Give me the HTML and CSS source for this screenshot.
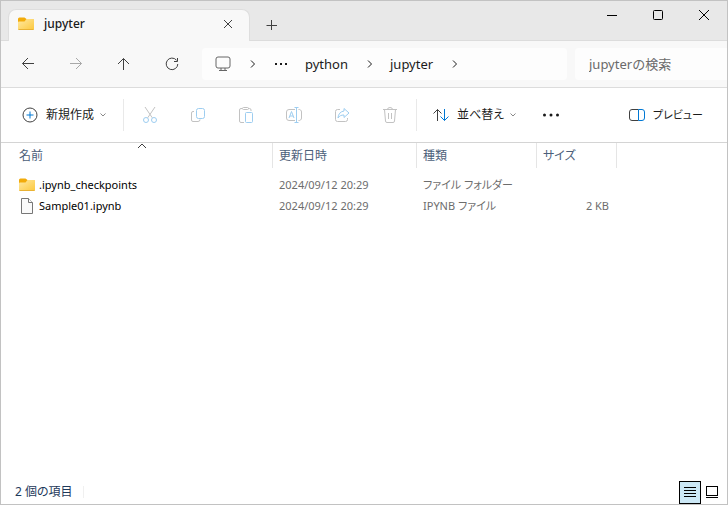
FILE: index.html
```html
<!DOCTYPE html>
<html lang="ja">
<head>
    <meta charset="UTF-8">
    <meta name="viewport" content="width=device-width, initial-scale=1.0">
    <title>jupyter</title>
    <link rel="stylesheet" href="styles.css">
</head>
<body>
    <svg class="defs" aria-hidden="true">
        <defs>
            <linearGradient id="folderFill" x1="0" y1="0" x2="1" y2="1">
                <stop offset="0" stop-color="#ffe9a3"/>
                <stop offset="1" stop-color="#fcc83c"/>
            </linearGradient>
            <symbol id="folder" viewBox="0 0 16 14">
                <path d="M0 2a1.500 1.500 0 0 1 1.500-1.500h5L8.500 2H14.500A1.500 1.500 0 0 1 16 3.500V6H0z" fill="#f2ab0a"/>
                <path d="M0 5.500a1 1 0 0 1 1-1h5.500L8.500 2H15a1 1 0 0 1 1 1v9a1 1 0 0 1-1 1H1a1 1 0 0 1-1-1z" fill="url(#folderFill)"/>
                <path d="M.5 12.500h15" stroke="#e9b234" stroke-width="1"/>
            </symbol>
            <symbol id="chevron" viewBox="0 0 8 10">
                <path d="M2 1.500L5.500 5 2 8.500"/>
            </symbol>
            <symbol id="chevronDown" viewBox="0 0 8 6">
                <path d="M1.500 1.500L4 4l2.500-2.500"/>
            </symbol>
        </defs>
    </svg>

    <div class="window">
        <!-- タブとウィンドウボタン -->
        <header class="titlebar">
            <div class="tab">
                <svg class="folder-icon" viewBox="0 0 16 14"><use href="#folder"/></svg>
                <span class="tab-title">jupyter</span>
                <button class="tab-close" aria-label="タブを閉じる">
                    <svg class="icon" width="10" height="10" viewBox="0 0 10 10"><path d="M1 1l8 8M9 1L1 9"/></svg>
                </button>
            </div>
            <button class="tab-new" aria-label="新しいタブ">
                <svg class="icon" width="12" height="12" viewBox="0 0 12 12"><path d="M5.500 1v10M.5 6.500h10.500"/></svg>
            </button>
            <div class="window-buttons">
                <button aria-label="最小化"><svg class="icon black" width="12" height="12" viewBox="0 0 12 12"><path d="M1 6.500h10"/></svg></button>
                <button aria-label="最大化"><svg class="icon black" width="12" height="12" viewBox="0 0 12 12"><rect x="1.500" y="1.500" width="9" height="9" rx="1"/></svg></button>
                <button aria-label="閉じる"><svg class="icon black" width="12" height="12" viewBox="0 0 12 12"><path d="M1 1l10 10M11 1L1 11"/></svg></button>
            </div>
        </header>

        <!-- ナビゲーション -->
        <nav class="navbar">
            <button class="tool" aria-label="戻る"><svg class="icon" width="14" height="14" viewBox="0 0 14 14"><path d="M13 6.500H1.500M7 1L1.500 6.500 7 12"/></svg></button>
            <button class="tool" aria-label="進む" disabled><svg class="icon faded" width="14" height="14" viewBox="0 0 14 14"><path d="M1 6.500h11.500M7 1l5.500 5.500L7 12"/></svg></button>
            <button class="tool" aria-label="上へ"><svg class="icon" width="14" height="14" viewBox="0 0 14 14"><path d="M6.500 13V1.500M1 7l5.500-5.500L12 7"/></svg></button>
            <button class="tool" aria-label="更新"><svg class="icon" width="14" height="14" viewBox="0 0 14 14"><path d="M11.500 3.200A5.800 5.800 0 1 0 12.800 7M12.500 1v3.500H9"/></svg></button>
            <div class="address">
                <button class="crumb" aria-label="PC">
                    <svg class="icon monitor" width="16" height="16" viewBox="0 0 16 16"><rect x="1" y="1" width="14" height="11" rx="2"/><path d="M6 12v2.500M10 12v2.500M4 14.500h8"/></svg>
                </button>
                <svg class="icon arrow" viewBox="0 0 8 10"><use href="#chevron"/></svg>
                <button class="crumb dots-crumb" aria-label="その他のフォルダー">
                    <svg class="dots" width="14" height="4" viewBox="0 0 14 4"><path d="M1 1h2v2H1zM6 1h2v2H6zM11 1h2v2h-2z"/></svg>
                </button>
                <button class="crumb">python</button>
                <svg class="icon arrow" viewBox="0 0 8 10"><use href="#chevron"/></svg>
                <button class="crumb">jupyter</button>
                <svg class="icon arrow" viewBox="0 0 8 10"><use href="#chevron"/></svg>
            </div>
            <input class="search" type="text" placeholder="jupyterの検索" aria-label="jupyterの検索">
        </nav>

        <!-- コマンドバー -->
        <div class="commands">
            <button class="command new">
                <svg class="icon" width="16" height="16" viewBox="0 0 16 16"><circle cx="8" cy="8" r="7"/><path class="blue" d="M8 4.500v7M4.500 8h7"/></svg>
                <span>新規作成</span>
                <svg class="icon down" viewBox="0 0 8 6"><use href="#chevronDown"/></svg>
            </button>
            <span class="divider"></span>
            <div class="edit-tools">
                <button class="tool" aria-label="切り取り" disabled><svg class="icon off" width="16" height="16" viewBox="0 0 16 16"><path d="M3 0l7.300 10.800M13 0L5.700 10.800"/><circle class="sky" cx="4" cy="13" r="2.500"/><circle class="sky" cx="12" cy="13" r="2.500"/></svg></button>
                <button class="tool" aria-label="コピー" disabled><svg class="icon off" width="16" height="16" viewBox="0 0 16 16"><path d="M4 4.500H3A1.500 1.500 0 0 0 1.500 6v7A1.500 1.500 0 0 0 3 14.500h5a2 2 0 0 0 2-2"/><rect class="sky" x="6.500" y="1.500" width="8" height="10" rx="2"/></svg></button>
                <button class="tool" aria-label="貼り付け" disabled><svg class="icon off" width="16" height="16" viewBox="0 0 16 16"><path d="M6 15.500H3A1.500 1.500 0 0 1 1.500 14V3A1.500 1.500 0 0 1 3 1.500h1M10 1.500h1.500A1.500 1.500 0 0 1 13 3v1"/><rect x="4.500" y=".5" width="6" height="2" rx="1"/><rect class="sky" x="7.500" y="5.500" width="7" height="10" rx="1"/></svg></button>
                <button class="tool" aria-label="名前の変更" disabled><svg class="icon off" width="16" height="16" viewBox="0 0 16 16"><path d="M9 13.500H3A2.500 2.500 0 0 1 .5 11V5A2.500 2.500 0 0 1 3 2.500h6M12.500 2.500A2.500 2.500 0 0 1 15.500 5v6a2.500 2.500 0 0 1-3 2.500"/><path class="sky" d="M10.500 .5v15M8.500 .5h4M8.500 15.500h4M3 11l2.500-6.500L8 11M4 9h3"/></svg></button>
                <button class="tool" aria-label="共有" disabled><svg class="icon off" width="16" height="16" viewBox="0 0 16 16"><path d="M6 2.500H3.500A2 2 0 0 0 1.500 4.500v8a2 2 0 0 0 2 2h8a2 2 0 0 0 2-2V11"/><path class="sky" d="M10 1.500L15 6l-5 4.500V8C7 8 5.500 8.800 4 11c.2-4 2.500-6.500 6-7z"/></svg></button>
                <button class="tool" aria-label="削除" disabled><svg class="icon off" width="16" height="16" viewBox="0 0 16 16"><path d="M1 2.500h14M5.500 2.500a2.500 2 0 0 1 5 0M2.500 2.500l1 11.500a1.500 1.500 0 0 0 1.500 1.500h6a1.500 1.500 0 0 0 1.500-1.500l1-11.500M6.500 6v6M9.500 6v6"/></svg></button>
            </div>
            <span class="divider"></span>
            <button class="command">
                <svg class="icon" width="16" height="16" viewBox="0 0 16 16"><path d="M4.500 14V2.500M.5 6.500l4-4 4 4"/><path class="blue" d="M11.500 2v11.500M7.500 9.500l4 4 4-4"/></svg>
                <span>並べ替え</span>
                <svg class="icon down" viewBox="0 0 8 6"><use href="#chevronDown"/></svg>
            </button>
            <button class="more" aria-label="もっと見る">
                <svg class="dots" width="18" height="4" viewBox="0 0 18 4"><circle cx="2.500" cy="2" r="1.500"/><circle cx="9" cy="2" r="1.500"/><circle cx="15.500" cy="2" r="1.500"/></svg>
            </button>
            <button class="command preview">
                <svg class="icon" width="16" height="16" viewBox="0 0 16 16"><path d="M9.500 2.500H3A2.500 2.500 0 0 0 .5 5v6A2.500 2.500 0 0 0 3 13.500h6.500"/><path class="blue" d="M9.500 2.500H13A2.500 2.500 0 0 1 15.500 5v6a2.500 2.500 0 0 1-2.500 2.500H9.500z"/></svg>
                <span>プレビュー</span>
            </button>
        </div>

        <!-- ファイル一覧 -->
        <main class="files">
            <table>
                <colgroup>
                    <col class="col-name"><col class="col-date"><col class="col-type"><col class="col-size"><col>
                </colgroup>
                <thead>
                    <tr>
                        <th class="sorted">名前
                            <svg class="icon sort-mark" width="10" height="6" viewBox="0 0 10 6"><path d="M1 5l4-4 4 4"/></svg>
                        </th>
                        <th>更新日時</th>
                        <th>種類</th>
                        <th>サイズ</th>
                        <td></td>
                    </tr>
                </thead>
                <tbody>
                    <tr>
                        <td class="name"><div class="file"><svg class="folder-icon" viewBox="0 0 16 14"><use href="#folder"/></svg>.ipynb_checkpoints</div></td>
                        <td>2024/09/12 20:29</td>
                        <td>ファイル フォルダー</td>
                        <td class="size"></td>
                        <td></td>
                    </tr>
                    <tr>
                        <td class="name"><div class="file"><svg class="page-icon" viewBox="0 0 16 16"><path d="M2.500 .5h7l4 4v11h-11z"/><path d="M9.500 .5v4h4"/></svg>Sample01.ipynb</div></td>
                        <td>2024/09/12 20:29</td>
                        <td>IPYNB ファイル</td>
                        <td class="size">2 KB</td>
                        <td></td>
                    </tr>
                </tbody>
            </table>
        </main>

        <!-- ステータスバー -->
        <footer class="status">
            <span class="count">2 個の項目</span>
            <div class="views">
                <button class="view active" aria-label="詳細表示"><svg class="icon black" width="14" height="12" viewBox="0 0 14 12"><path d="M1 1.500h12M1 4.500h12M1 7.500h12M1 10.500h12"/></svg></button>
                <button class="view" aria-label="大きいアイコン"><svg class="icon black" width="14" height="14" viewBox="0 0 14 14"><rect x="1.500" y="1.500" width="11" height="9"/><path d="M1 12.500h12"/></svg></button>
            </div>
        </footer>
    </div>
</body>
</html>
```
FILE: styles.css
```css
* {
    box-sizing: border-box;
}

body {
    margin: 0;
    font-family: "Noto Sans", "Noto Sans CJK JP", sans-serif;
    font-size: 12px;
    line-height: 20px;
    color: #1b1b1b;
}

button {
    display: flex;
    align-items: center;
    justify-content: center;
    padding: 0;
    border: none;
    background: none;
    font: inherit;
    color: inherit;
}

.defs {
    position: absolute;
    width: 0;
    height: 0;
}

.window {
    display: flex;
    flex-direction: column;
    min-height: 100vh;
    border: 1px solid #c2c2c2;
    background: #fff;
}

/* アイコン */
.icon {
    display: block;
    flex: none;
    fill: none;
    stroke: #404040;
    stroke-width: 1;
}

.icon.black {
    stroke: #000;
}

.icon.faded {
    stroke: #a8a8a8;
}

.icon.off {
    stroke: #c2c2c2;
}

.icon .blue {
    stroke: #0078d4;
}

.icon .sky {
    stroke: #9dcdf0;
}

.dots {
    fill: #1b1b1b;
}

.folder-icon {
    flex: none;
    width: 16px;
    height: 14px;
}

.page-icon {
    flex: none;
    width: 16px;
    height: 16px;
    fill: #fafafa;
    stroke: #777;
}

/* タブ */
.titlebar {
    display: flex;
    height: 40px;
    padding-left: 7px;
    background: #e8e8e8;
    box-shadow: inset 0 -1px #dcdcdc;
}

.tab {
    display: flex;
    align-items: center;
    width: 242px;
    margin-top: 8px;
    padding: 0 11px 3px 9px;
    border: 1px solid #dedede;
    border-bottom: none;
    border-radius: 8px 8px 0 0;
    background: #f8f8f8;
}

.tab-title {
    flex: 1;
    margin-left: 10px;
    font-weight: 500;
}

.tab-close {
    width: 20px;
    height: 20px;
}

.tab-new {
    width: 44px;
    margin-top: 8px;
}

.window-buttons {
    display: flex;
    margin-left: auto;
}

.window-buttons button {
    width: 46px;
    height: 28px;
}

/* ナビゲーション */
.navbar {
    display: flex;
    align-items: center;
    height: 47px;
    padding-left: 3px;
    border-bottom: 1px solid #dcdcdc;
    background: #f8f8f8;
    font-size: 13px;
}

.tool {
    flex: none;
    width: 48px;
    height: 32px;
}

.address {
    display: flex;
    flex: 1;
    align-items: center;
    height: 32px;
    margin: 0 8px 0 6px;
    padding-left: 13px;
    border-radius: 4px;
    background: #fdfdfd;
}

.arrow {
    width: 8px;
    height: 10px;
    margin: 0 16px 0 18px;
    stroke: #1b1b1b;
}

.monitor {
    stroke: #666;
}

.dots-crumb {
    width: 20px;
    margin: 0 14px 0 -2px;
}

.search {
    width: 152px;
    height: 32px;
    padding: 0 14px;
    border: none;
    border-radius: 4px 0 0 4px;
    background: #fdfdfd;
    font: inherit;
}

.search::placeholder {
    color: #6a6a6a;
    opacity: 1;
}

/* コマンドバー */
.commands {
    display: flex;
    align-items: center;
    height: 55px;
    padding-left: 1px;
    border-bottom: 1px solid #d4d4d4;
}

.command {
    gap: 8px;
    height: 32px;
    padding: 0 16px;
    font-feature-settings: "palt";
}

.command.new {
    padding-left: 20px;
}

.down {
    width: 8px;
    height: 6px;
    margin-left: -3px;
    stroke: #888;
}

.divider {
    width: 1px;
    height: 32px;
    background: #e9e9e9;
}

.edit-tools {
    display: flex;
    padding: 0 2px;
}

.more {
    width: 36px;
    height: 32px;
}

.preview {
    margin-left: auto;
    padding-right: 24px;
    font-size: 11px;
}

/* ファイル一覧 */
.files {
    flex: 1;
}

table {
    width: 100%;
    table-layout: fixed;
    border-collapse: separate;
    border-spacing: 0;
    font-feature-settings: "palt";
}

.col-name {
    width: 272px;
}

.col-date {
    width: 144px;
}

.col-type {
    width: 120px;
}

.col-size {
    width: 80px;
}

th {
    height: 25px;
    padding: 0 6px;
    border-right: 1px solid #e5e5e5;
    color: #4c607a;
    font-weight: 400;
    text-align: left;
}

th.sorted {
    position: relative;
    padding-left: 18px;
}

.sort-mark {
    position: absolute;
    top: 0;
    left: 50%;
}

td {
    height: 21px;
    padding: 0 6px;
    color: #6d6d6d;
    font-size: 11px;
    white-space: nowrap;
}

tbody::before {
    content: "";
    display: table-row;
    height: 6px;
}

td.name {
    padding-left: 18px;
    color: #000;
}

.file {
    display: flex;
    align-items: center;
    gap: 4px;
}

td.size {
    padding-right: 8px;
    text-align: right;
}

/* ステータスバー */
.status {
    display: flex;
    align-items: center;
    justify-content: space-between;
    height: 24px;
    padding: 0 4px 0 14px;
    color: #1e395b;
}

.count {
    padding-right: 10px;
    border-right: 1px solid #f0f0f0;
    font-feature-settings: "palt";
    line-height: 12px;
}

.views {
    display: flex;
}

.view {
    width: 22px;
    height: 23px;
}

.view.active {
    border: 1px solid #000;
    background: #cce8f6;
}
```
